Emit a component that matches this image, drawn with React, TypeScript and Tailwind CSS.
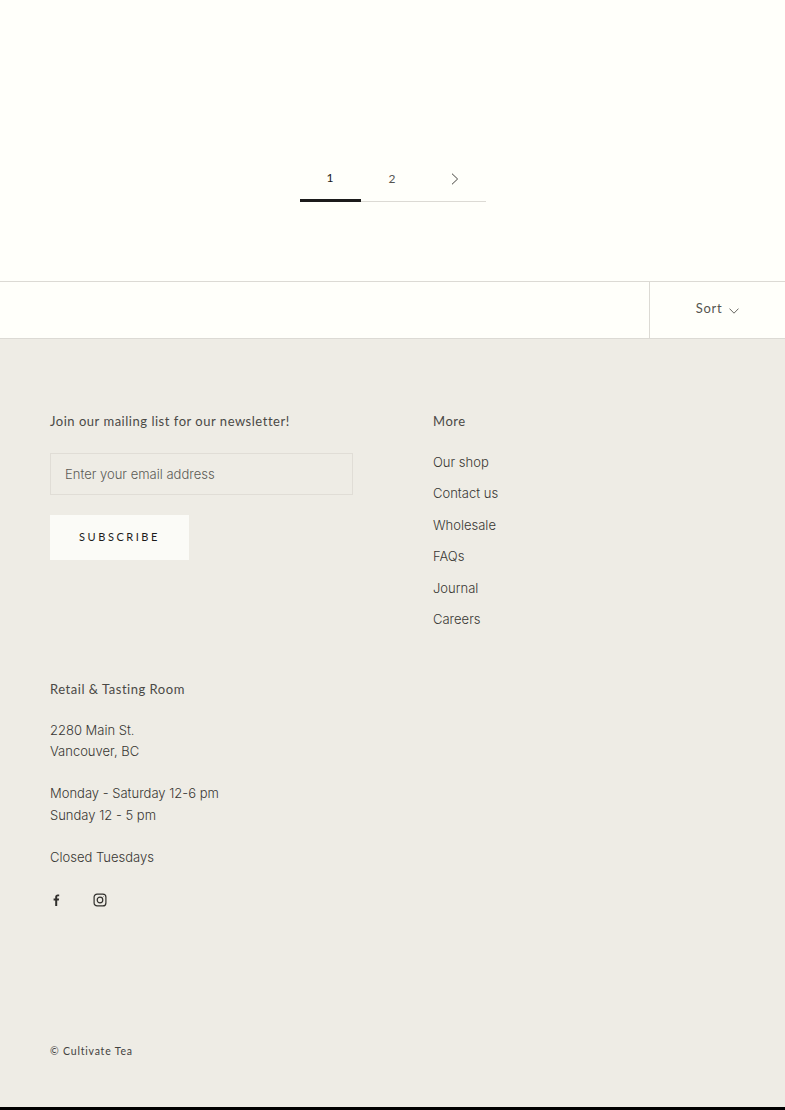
const moreLinks = ["Our shop", "Contact us", "Wholesale", "FAQs", "Journal", "Careers"];

const headingFont = "font-['Lato',sans-serif] font-normal text-[13px] leading-[20px] tracking-[0.52px] text-[#4a4945]";

function Pagination() {
    return (
        <div className="h-[281px] flex justify-center items-start pt-[156px]">
            <nav className="flex h-[46px] w-[186px] border-b border-[#dcdad4] font-['Lato',sans-serif] text-[12px] text-[#55544f]">
                <span className="w-[61px] h-[46px] border-b-[3px] border-[#1c1b1b] flex items-center justify-center text-[#1c1b1b]">1</span>
                <span className="w-[62px] flex items-center justify-center pl-[1px]">2</span>
                <span className="w-[63px] flex items-center justify-center pl-[1px]">
                    <svg viewBox="0 0 8 12" className="h-[12px] w-[8px]" fill="none" stroke="#45443f" strokeWidth="1">
                        <path d="M1 .7 6.6 6 1 11.3" />
                    </svg>
                </span>
            </nav>
        </div>
    );
}

function Toolbar() {
    return (
        <div className="h-[58px] flex justify-end border-y border-[#dcdad4]">
            <div className="w-[136px] border-l border-[#dcdad4] flex items-center justify-center gap-[7px] pb-[2px] font-['Lato',sans-serif] text-[13px] tracking-[0.7px] text-[#55544f]">
                <span>Sort</span>
                <svg viewBox="0 0 10 6" className="h-[6px] w-[10px] mt-[3px]" fill="none" stroke="#55544f" strokeWidth="0.9">
                    <path d="M.5.6 5 5.2 9.5.6" />
                </svg>
            </div>
        </div>
    );
}

function Footer() {
    return (
        <footer className="h-[771px] bg-[#eeece5] pl-[50px] pr-[50px] pt-[72px] border-b-[3px] border-black font-['Inter',sans-serif] font-light text-[13px] text-[#383733]">
            <div className="flex gap-[80px]">
                <div className="w-[303px]">
                    <h3 className={headingFont}>Join our mailing list for our newsletter!</h3>
                    <input
                        className="mt-[22px] block w-full h-[42px] px-[14px] border border-[#e0ddd6] bg-transparent outline-none placeholder:text-[#5c5b56] font-['Inter',sans-serif] font-light text-[13px]"
                        placeholder="Enter your email address"
                    />
                    <button className="mt-[20px] block w-[139px] h-[45px] bg-[#fbfbf7] font-['Lato',sans-serif] font-normal text-[11px] tracking-[2.55px] text-[#1c1b1b]">
                        SUBSCRIBE
                    </button>
                </div>
                <div>
                    <h3 className={headingFont}>More</h3>
                    <ul className="mt-[20.6px] flex flex-col gap-[10px]">
                        {moreLinks.map((link) => (
                            <li key={link} className="leading-[21.5px]">{link}</li>
                        ))}
                    </ul>
                </div>
            </div>

            <div className="mt-[48.4px]">
                <h3 className={headingFont}>Retail &amp; Tasting Room</h3>
                <div className="mt-[20.6px] leading-[21.5px]">
                    <p>2280 Main St.</p>
                    <p>Vancouver, BC</p>
                    <p className="mt-[20.6px]">Monday - Saturday 12-6 pm</p>
                    <p>Sunday 12 - 5 pm</p>
                    <p className="mt-[20.8px]">Closed Tuesdays</p>
                </div>
                <div className="mt-[25px] flex items-center gap-[30px] text-[#302f2c]">
                    <svg viewBox="0 0 14 14" className="h-[14px] w-[14px]" fill="currentColor">
                        <path d="M5.2 13V7.6H3.6V5.5h1.6V4c0-1.7 1-2.6 2.5-2.6.7 0 1.3.1 1.5.1v1.8H8.2c-.8 0-1 .4-1 1v1.2h1.9l-.3 2.1H7.2V13z" />
                    </svg>
                    <svg viewBox="0 0 14 14" className="h-[14px] w-[14px] -ml-[1px]" fill="none" stroke="currentColor" strokeWidth="1.2">
                        <rect x="1.1" y="1.1" width="11.8" height="11.8" rx="3" />
                        <circle cx="7" cy="7" r="2.8" />
                        <circle cx="10.4" cy="3.6" r=".4" fill="currentColor" stroke="none" />
                    </svg>
                </div>
                <p className="mt-[137px] font-['Lato',sans-serif] font-normal text-[10.5px] tracking-[0.8px] text-[#43423e]">© Cultivate Tea</p>
            </div>
        </footer>
    );
}

export default function App() {
    return (
        <div className="min-h-[1110px] bg-[#fffffa]">
            <Pagination />
            <Toolbar />
            <Footer />
        </div>
    );
}
